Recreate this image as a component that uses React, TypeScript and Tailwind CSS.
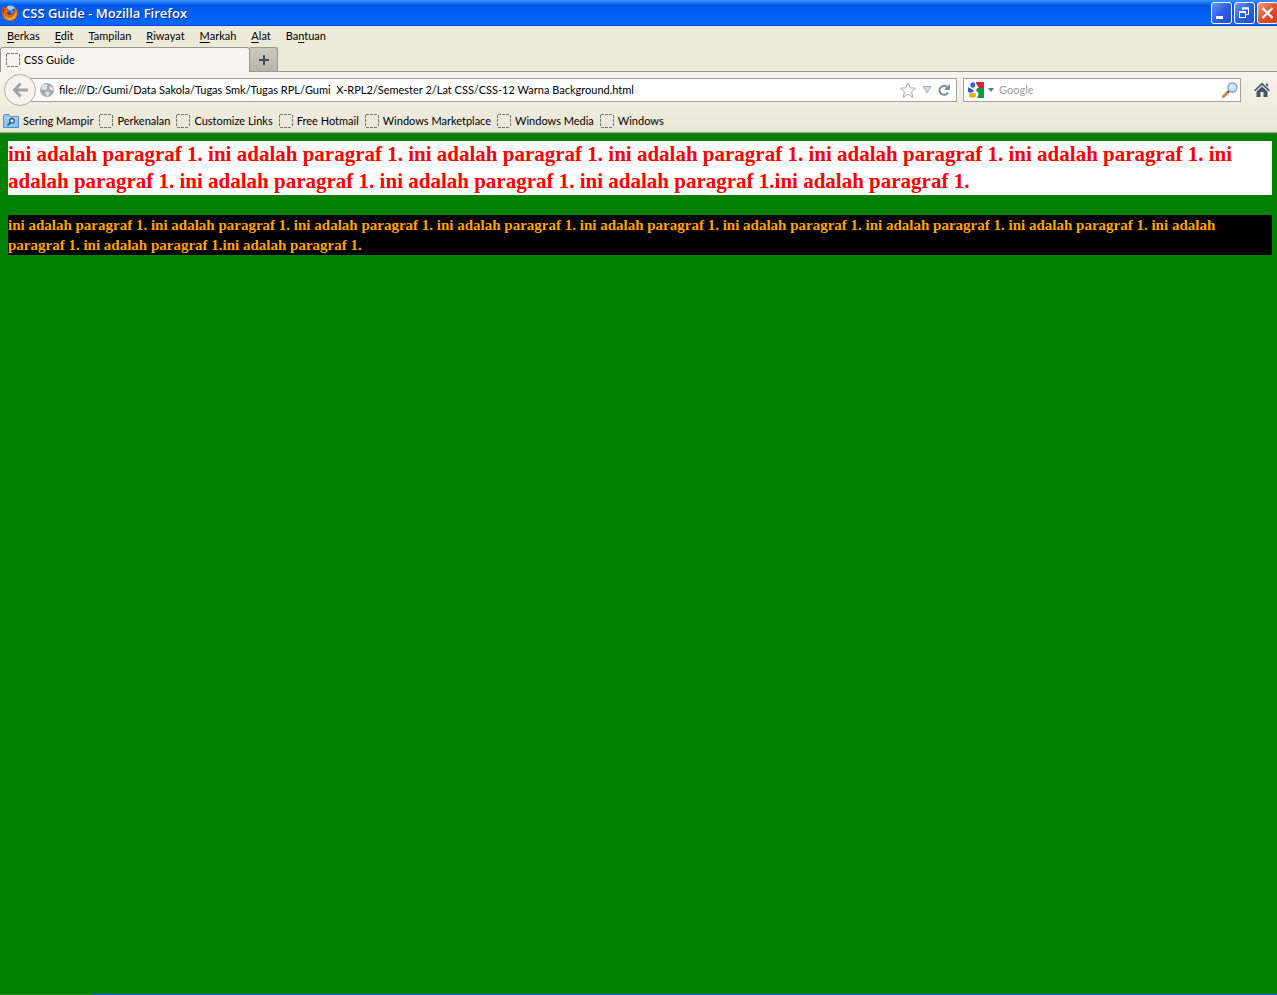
import React from "react";

const menus = [
  { before: "", key: "B", after: "erkas" },
  { before: "", key: "E", after: "dit" },
  { before: "", key: "T", after: "ampilan" },
  { before: "", key: "R", after: "iwayat" },
  { before: "", key: "M", after: "arkah" },
  { before: "", key: "A", after: "lat" },
  { before: "Ba", key: "n", after: "tuan" },
];

const bookmarks = [
  "Perkenalan",
  "Customize Links",
  "Free Hotmail",
  "Windows Marketplace",
  "Windows Media",
  "Windows",
];

function BlankIcon() {
  return (
    <svg className="h-3.5 w-3.5 shrink-0" viewBox="0 0 14 14" fill="none" aria-hidden="true">
      <path d="M1 .5H13M1 13.500H13M.5 1V13M13.500 1V13" stroke="#77756c" strokeDasharray="3 1" />
    </svg>
  );
}

function FirefoxIcon() {
  return (
    <svg className="h-4 w-4 shrink-0" viewBox="0 0 16 16" aria-hidden="true">
      <circle cx="8" cy="7.500" r="7" fill="#1f4f9c" />
      <path d="M4.500 2C7 -.2 11 .2 13 3C12 4.500 10 4 9 5.500C8 6 6 5 4.500 2z" fill="#9dcdf0" />
      <path d="M9.500 5L12 6.500L10 9L8.500 7.500z" fill="#5b9bd8" />
      <path
        d="M1 1L3 3L5 2.500L5 4.200L7.500 5.500L7 6.800L5 7.500C5 9.500 7.500 10.500 9.500 9.500C11.500 9 12.500 7 12.500 5C13.200 4 12.800 2.500 12.500 1.800C15 3.500 16 6.500 15.500 9C15 13 12 16 8 16C3 16 0 12 0 8C0 5 0 3 1 1z"
        fill="#e2620f"
      />
      <path d="M2 9C4 13 8 13.500 11 11.500C13 10 14 8 14 5C16 10 13 15 8 15C5 15 2.500 12.500 2 9z" fill="#f7a928" />
      <path d="M1 2L2.500 4L2 7L.5 9z" fill="#a93a16" />
    </svg>
  );
}

function TitleBar() {
  return (
    <header className="flex h-[26px] items-center justify-between overflow-hidden bg-linear-to-b from-[#3a94ff] via-[#0058e8] via-20% to-[#0068ff] border-b border-[#0046d0] pl-0.5">
      <div className="flex items-center gap-1">
        <FirefoxIcon />
        <h1 className="font-['Open_Sans',sans-serif] text-[13px] font-semibold text-white [text-shadow:1px_1px_0_#0a2a80]">
          CSS Guide - Mozilla Firefox
        </h1>
      </div>
      <div className="-mr-px flex gap-0.5">
        <button
          aria-label="Minimize"
          className="h-[22px] w-[21px] rounded-[3px] border border-white bg-linear-to-br from-[#6f97f5] via-[#2c5fe4] to-[#1c4fd6]"
        >
          <svg viewBox="0 0 19 20" aria-hidden="true">
            <rect x="4" y="13" width="7" height="3" fill="#fff" />
          </svg>
        </button>
        <button
          aria-label="Restore"
          className="h-[22px] w-[21px] rounded-[3px] border border-white bg-linear-to-br from-[#6f97f5] via-[#2c5fe4] to-[#1c4fd6]"
        >
          <svg viewBox="0 0 19 20" fill="none" stroke="#fff" aria-hidden="true">
            <path d="M7.500 7V5H13.500V11.500H11" />
            <path d="M7 5.500H14" strokeWidth="2" />
            <rect x="4.500" y="8.500" width="6" height="6" />
            <path d="M4 9H11" strokeWidth="2" />
          </svg>
        </button>
        <button
          aria-label="Close"
          className="h-[22px] w-[21px] rounded-[3px] border border-white bg-linear-to-br from-[#f09a80] via-[#e0522e] to-[#c83c14]"
        >
          <svg viewBox="0 0 19 20" stroke="#fff" strokeWidth="2.200" aria-hidden="true">
            <path d="M4.500 5L14.500 15M14.500 5L4.500 15" />
          </svg>
        </button>
      </div>
    </header>
  );
}

function MenuBar() {
  return (
    <nav className="flex h-[21px] items-center gap-[15px] pb-px pl-[7px]">
      {menus.map((m) => (
        <button key={m.key}>
          {m.before}
          <span className="underline underline-offset-2">{m.key}</span>
          {m.after}
        </button>
      ))}
    </nav>
  );
}

function TabStrip() {
  return (
    <div className="flex h-[25px] border-b border-[#9a978c]">
      <button className="-mb-px flex w-[250px] items-center gap-1 rounded-t-[3px] border border-b-0 border-[#9a978c] bg-[#f7f5ef] pl-[5px]">
        <BlankIcon />
        CSS Guide
      </button>
      <button
        aria-label="New tab"
        className="flex w-7 items-center justify-center rounded-tr-[3px] border border-b-0 border-l-0 border-[#9a978c] bg-linear-to-b from-[#cbc8bc] to-[#b8b5a9]"
      >
        <svg className="h-2.5 w-2.5" viewBox="0 0 10 10" stroke="#3f4a5a" strokeWidth="2" aria-hidden="true">
          <path d="M5 0V10M0 5H10" />
        </svg>
      </button>
    </div>
  );
}

function AddressBar() {
  return (
    <div className="flex h-9 items-center bg-linear-to-b from-[#f5f3ec] to-[#efecdf] pl-1 pr-[7px]">
      <button
        aria-label="Back"
        className="z-10 flex h-8 w-8 shrink-0 items-center justify-center rounded-full border border-[#b0ada2] bg-[#f5f3ec]"
      >
        <svg className="h-4 w-4" viewBox="0 0 16 16" fill="none" stroke="#a3a5a5" strokeWidth="3" aria-hidden="true">
          <path d="M8.500 1.500L2.500 8L8.500 14.500M3 8H16" />
        </svg>
      </button>
      <div className="-ml-1.5 flex h-6 flex-1 items-center border border-[#a5a297] bg-white pl-[9px] pr-1.5">
        <svg className="h-3.5 w-3.5 shrink-0" viewBox="0 0 14 14" aria-hidden="true">
          <circle cx="7" cy="7" r="7" fill="#a4a8ac" />
          <path d="M2 2.500L5.500 1L8 2L6.500 4L7.500 5.500L5 7.500L3 6L1 7z" fill="#dfe1e3" />
          <path d="M9 3L12.500 4L13.500 7L11.500 7.500L9.500 6zM5 9L8.500 8.500L10 10.500L7.500 13.500L6 12z" fill="#dfe1e3" />
        </svg>
        <input
          aria-label="Address"
          className="ml-[5px] min-w-0 flex-1 bg-transparent text-black outline-none"
          defaultValue="file:///D:/Gumi/Data Sakola/Tugas Smk/Tugas RPL/Gumi  X-RPL2/Semester 2/Lat CSS/CSS-12 Warna Background.html"
        />
        <button aria-label="Bookmark this page">
          <svg className="h-4 w-4" viewBox="0 0 16 16" fill="#fafafa" stroke="#a3a8b0" aria-hidden="true">
            <path d="M8 .8L10.200 5.800L15.500 6.200L11.500 9.800L12.800 15.200L8 12.300L3.200 15.200L4.500 9.800L.5 6.200L5.800 5.800z" />
          </svg>
        </button>
        <button aria-label="Show history" className="ml-1.5">
          <svg className="h-2 w-2.5" viewBox="0 0 10 8" fill="#ced7e2" stroke="#a9b6c6" aria-hidden="true">
            <path d="M.8 .5H9.200L5 7z" />
          </svg>
        </button>
        <button aria-label="Reload" className="ml-1.5">
          <svg className="h-3 w-3" viewBox="0 0 12 12" fill="none" stroke="#7d8a9b" strokeWidth="2" aria-hidden="true">
            <path d="M8.800 2.800A4.500 4.500 0 1 0 10 8.500" />
            <path d="M12 0V6H6L8 4V3.500z" fill="#7d8a9b" stroke="none" />
          </svg>
        </button>
      </div>
      <div className="ml-1.5 flex h-6 w-[278px] items-center border border-[#a5a297] bg-white pl-1 pr-0.5">
        <button aria-label="Search engine" className="flex items-center gap-1">
          <svg className="h-4 w-4" viewBox="0 0 16 16" aria-hidden="true">
            <path d="M8 0H16V6H11C10 4 8 3 8 0z" fill="#e0202a" />
            <path d="M9 6H16V16H9C11 13 11 10 8 9z" fill="#109a3c" />
            <path d="M0 5C2 7 4 6 6 9C4 11 2 11 0 10z" fill="#2b62d9" />
            <ellipse cx="4.800" cy="3" rx="2.400" ry="2.800" fill="#2b62d9" />
            <ellipse cx="4.500" cy="13.300" rx="3.500" ry="2.500" fill="#f2a818" />
          </svg>
          <svg className="h-1 w-1.5" viewBox="0 0 6 4" fill="#76746e" aria-hidden="true">
            <path d="M0 0H6L3 4z" />
          </svg>
        </button>
        <input
          aria-label="Search"
          placeholder="Google"
          className="ml-[5px] min-w-0 flex-1 bg-transparent outline-none placeholder:text-[#a09e98]"
        />
        <button aria-label="Go">
          <svg className="h-4 w-4" viewBox="0 0 16 16" aria-hidden="true">
            <path d="M1.500 14.500L6 10" stroke="#d9803a" strokeWidth="3" strokeLinecap="round" />
            <path d="M5.500 10.500L7 9" stroke="#4a5568" strokeWidth="2" />
            <circle cx="10.500" cy="5.500" r="4.500" fill="#c9e5fa" stroke="#7ba0c9" strokeWidth="1.400" />
            <path d="M8 5.500A2.500 2.500 0 0 1 10.500 3" stroke="#fff" fill="none" />
          </svg>
        </button>
      </div>
      <button aria-label="Home" className="ml-[13px]">
        <svg className="h-4 w-4" viewBox="0 0 16 16" fill="#4a5563" aria-hidden="true">
          <path d="M8 .5L16 8.200L14.800 9.300L8 3L1.200 9.300L0 8.200z" />
          <path d="M2.500 9.500L8 4.500L13.500 9.500V15H9.500V10H6.500V15H2.500z" />
          <path d="M12 1.500H14V5L12 3.200z" />
        </svg>
      </button>
    </div>
  );
}

function BookmarksBar() {
  return (
    <nav className="flex h-[25px] items-center gap-1.5 border-b border-[#a5a297] bg-linear-to-b from-[#efecdf] to-[#e9e6d6] pt-px pl-[3px]">
      <button className="flex items-center gap-1">
        <svg className="h-4 w-4" viewBox="0 0 16 16" aria-hidden="true">
          <path d="M.5 14.500V2.500L1.500 1.500H6L7.500 3.500H15.500V14.500z" fill="#8ec5ee" stroke="#4d8fca" />
          <path d="M1 5H15" stroke="#c3e2f8" />
          <circle cx="9" cy="7.800" r="2.300" fill="#d5ecfb" stroke="#24598f" strokeWidth="1.300" />
          <path d="M7.300 9.500L4.500 12.500" stroke="#24598f" strokeWidth="1.600" />
        </svg>
        Sering Mampir
      </button>
      {bookmarks.map((name) => (
        <a key={name} href="#" className="flex items-center gap-1">
          <BlankIcon />
          {name}
        </a>
      ))}
    </nav>
  );
}

export default function App() {
  const sentence = "ini adalah paragraf 1. ";

  return (
    <div className="flex min-h-screen flex-col bg-[#ece9d8] font-[Lato,sans-serif] text-[11px] leading-4 whitespace-nowrap text-black">
      <TitleBar />
      <MenuBar />
      <TabStrip />
      <AddressBar />
      <BookmarksBar />

      <main className="flex-1 bg-[#008000] pt-2 pr-[5px] pl-2 font-['Liberation_Serif',serif] font-bold whitespace-normal">
        <p className="bg-white text-[21px] leading-[27px] text-[#ff0000]">
          {sentence.repeat(9) + "ini adalah paragraf 1.ini adalah paragraf 1."}
        </p>
        <p className="mt-5 bg-black text-[15px] leading-5 text-[#ffa500]">
          {sentence.repeat(9) + "ini adalah paragraf 1.ini adalah paragraf 1."}
        </p>
      </main>

      {/* top edge of the taskbar */}
      <footer className="flex h-px">
        <div className="w-[92px] bg-[#2f8a2f]" />
        <div className="flex-1 bg-[#245edb]" />
      </footer>
    </div>
  );
}
